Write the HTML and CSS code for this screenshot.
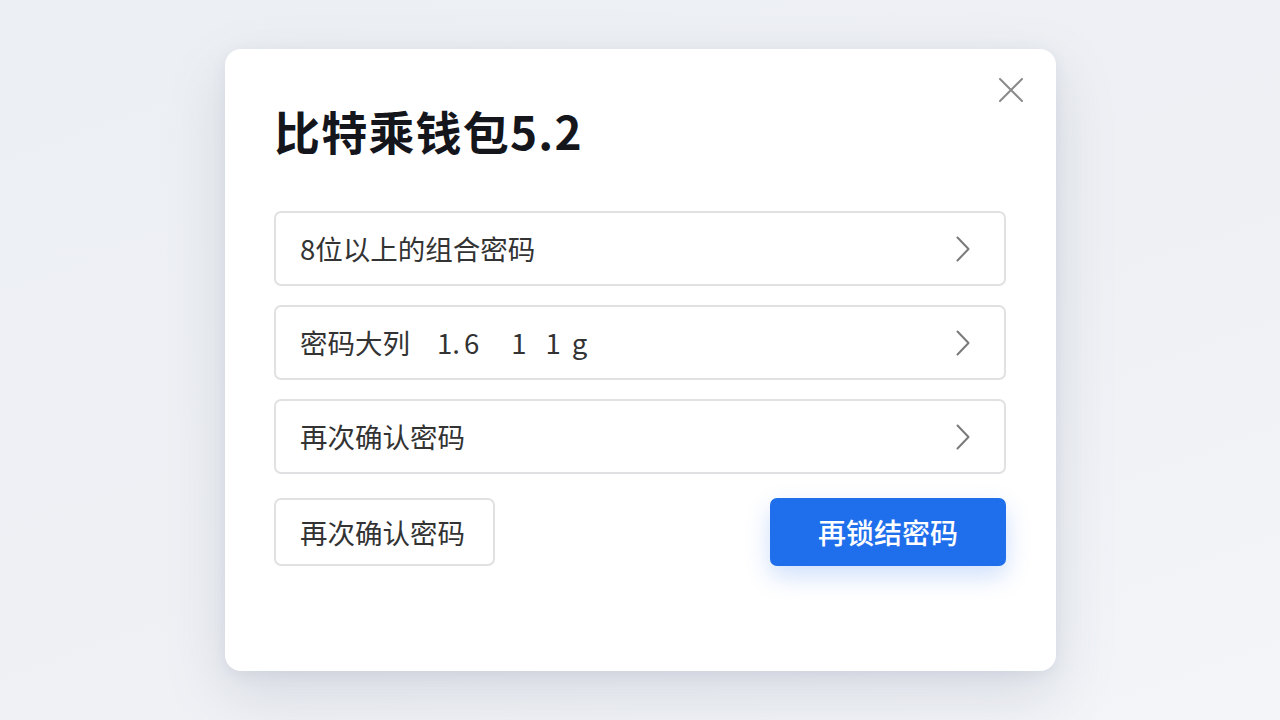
FILE: index.html
```
<!DOCTYPE html>
<html lang="zh-CN">
<head>
<meta charset="utf-8">
<title>比特乘钱包5.2</title>
<link rel="stylesheet" href="styles.css">
</head>
<body>
<div class="stage">
  <div class="dialog">
    <button class="close" aria-label="关闭">
      <svg width="24" height="24" viewBox="0 0 24 24"><path d="M1 1L23 23M23 1L1 23" stroke="#8a8a8a" stroke-width="2" fill="none" stroke-linecap="round"/></svg>
    </button>
    <h1 class="title">比特乘钱包5.2</h1>
    <div class="fields">
      <div class="field"><span class="label">8位以上的组合密码</span><svg class="chev" width="14" height="26" viewBox="0 0 14 26"><path d="M1.5 1.5L12.5 13L1.5 24.5" stroke="#7a7a7a" stroke-width="2" fill="none" stroke-linecap="round" stroke-linejoin="round"/></svg></div>
      <div class="field"><span class="label">密码大列<span class="seg s1">1.</span><span class="seg s2">6</span><span class="seg s3">1</span><span class="seg s4">1</span><span class="seg s5">g</span></span><svg class="chev" width="14" height="26" viewBox="0 0 14 26"><path d="M1.5 1.5L12.5 13L1.5 24.5" stroke="#7a7a7a" stroke-width="2" fill="none" stroke-linecap="round" stroke-linejoin="round"/></svg></div>
      <div class="field"><span class="label">再次确认密码</span><svg class="chev" width="14" height="26" viewBox="0 0 14 26"><path d="M1.5 1.5L12.5 13L1.5 24.5" stroke="#7a7a7a" stroke-width="2" fill="none" stroke-linecap="round" stroke-linejoin="round"/></svg></div>
    </div>
    <div class="actions">
      <button class="btn secondary">再次确认密码</button>
      <button class="btn primary">再锁结密码</button>
    </div>
  </div>
</div>
</body>
</html>
```
FILE: styles.css
```
* { box-sizing: border-box; }
html, body { margin: 0; padding: 0; }
body {
  width: 1280px;
  height: 720px;
  overflow: hidden;
  background: linear-gradient(160deg, #eceff3 0%, #eef0f4 55%, #f3f5f8 100%);
  font-family: "Noto Sans CJK SC", "Noto Sans", sans-serif;
}
.stage {
  padding: 49px 0 0 225px;
}
.dialog {
  position: relative;
  width: 831px;
  height: 622px;
  background: #ffffff;
  border-radius: 16px;
  box-shadow: 0 24px 60px rgba(110, 122, 150, 0.20), 0 4px 14px rgba(110, 122, 150, 0.10);
  padding: 54px 50px 0 49px;
}
.close {
  position: absolute;
  top: 29px;
  right: 33px;
  width: 24px;
  height: 24px;
  padding: 0;
  border: none;
  background: none;
  display: flex;
}
.title {
  margin: 0;
  font-size: 46px;
  line-height: 55px;
  font-weight: 700;
  color: #14161c;
  letter-spacing: 1.2px;
}
.fields {
  margin-top: 53px;
  display: flex;
  flex-direction: column;
  gap: 19px;
}
.field {
  height: 75px;
  border: 2px solid #e1e1e3;
  border-radius: 7px;
  display: flex;
  align-items: center;
  justify-content: space-between;
  padding: 0 34px 0 24px;
}
.label {
  font-size: 27.5px;
  color: #333333;
  line-height: 1;
  white-space: nowrap;
}
.seg { display: inline-block; }
.s1 { margin-left: 27px; }
.s2 { margin-left: 4px; }
.s3 { margin-left: 32px; }
.s4 { margin-left: 19px; }
.s5 { margin-left: 11px; }
.chev { display: block; }
.actions {
  margin-top: 24px;
  display: flex;
  justify-content: space-between;
  align-items: center;
}
.btn {
  font-family: "Noto Sans CJK SC", "Noto Sans", sans-serif;
  border-radius: 7px;
  cursor: pointer;
}
.secondary {
  width: 221px;
  height: 68px;
  background: #ffffff;
  border: 2px solid #e1e1e3;
  font-size: 27.5px;
  color: #333333;
  text-align: left;
  padding: 0 0 0 24px;
}
.primary {
  width: 236px;
  height: 68px;
  background: #1f6fec;
  border: none;
  color: #ffffff;
  font-size: 28px;
  font-weight: 500;
  box-shadow: 0 10px 24px rgba(31, 111, 236, 0.22);
}
```
